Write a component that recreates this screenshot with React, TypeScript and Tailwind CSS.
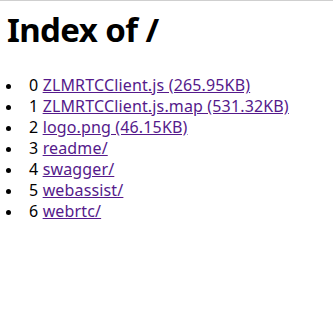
import React from "react";

const items = [
  { n: 0, label: "ZLMRTCClient.js (265.95KB)" },
  { n: 1, label: "ZLMRTCClient.js.map (531.32KB)" },
  { n: 2, label: "logo.png (46.15KB)" },
  { n: 3, label: "readme/" },
  { n: 4, label: "swagger/" },
  { n: 5, label: "webassist/" },
  { n: 6, label: "webrtc/" },
];

export default function App() {
  return (
    <div
      className="w-[333px] h-[322px] bg-white border-t border-[#cfcfcf] text-black"
      style={{ fontFamily: '"Noto Sans", "Open Sans", sans-serif' }}
    >
      <h1 className="text-[33px] font-bold leading-[40px] pl-[7px] pt-[9px] tracking-[-0.6px]">
        Index of /
      </h1>
      <ul className="mt-[25px] text-[16px] leading-[21px] tracking-[0.15px]">
        {items.map((it) => (
          <li key={it.n} className="flex items-center">
            <span className="ml-[6px] mr-[18px] mt-[1px] w-[5px] h-[5px] rounded-full bg-black shrink-0" />
            <span className="whitespace-pre">
              {it.n}{" "}
              <a href="#" className="text-[#551a8b] underline">
                {it.label}
              </a>
            </span>
          </li>
        ))}
      </ul>
    </div>
  );
}
